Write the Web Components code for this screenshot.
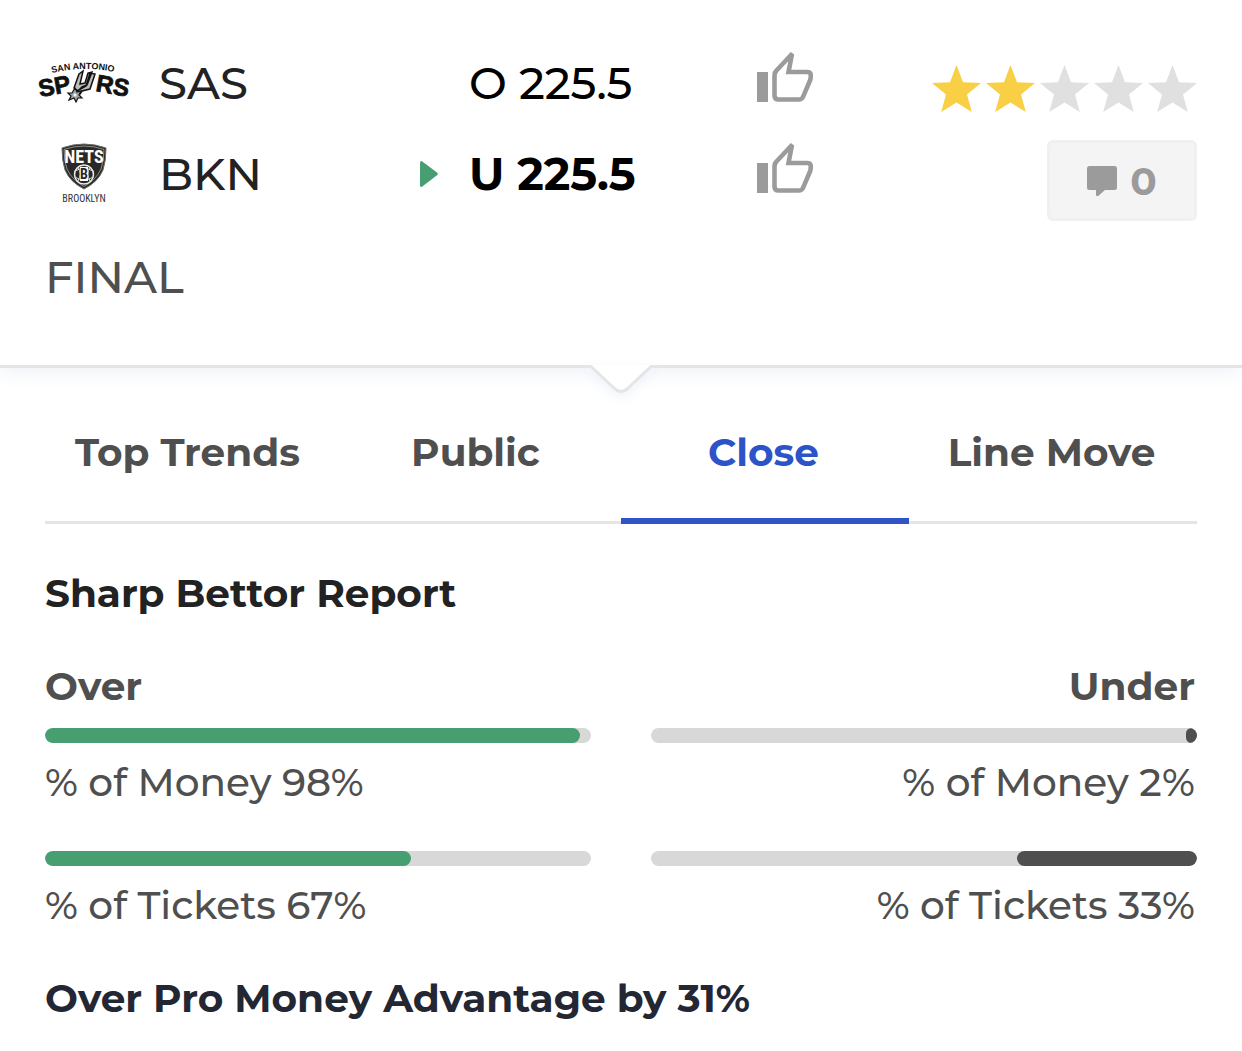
<!DOCTYPE html>
<html lang="en">
<head>
  <meta charset="UTF-8">
  <meta name="viewport" content="width=device-width, initial-scale=1">
  <title>SAS at BKN</title>
  <style>
    body {
      margin: 0;
      background: #fff;
      color: #4f4f4f;
      font-family: Montserrat, Inter, sans-serif;
      font-size: 39px;
      font-weight: 500;
      line-height: 46px;
    }
  </style>
</head>
<body>

<game-card>
  <bet-row>
    <spurs-logo slot="logo"></spurs-logo>
    <span slot="team">SAS</span>
    <span slot="line">O 225.5</span>
  </bet-row>
  <bet-row winner>
    <nets-logo slot="logo"></nets-logo>
    <span slot="team">BKN</span>
    <span slot="line">U 225.5</span>
  </bet-row>
  <span slot="status">FINAL</span>
  <star-rating slot="side" value="2"></star-rating>
  <comment-button slot="side">0</comment-button>
</game-card>

<main>
  <tab-bar>
    <tab-item>Top Trends</tab-item>
    <tab-item>Public</tab-item>
    <tab-item selected>Close</tab-item>
    <tab-item>Line Move</tab-item>
  </tab-bar>

  <sharp-report>
    <span slot="title">Sharp Bettor Report</span>
    <report-side>
      <span slot="name">Over</span>
      <percent-bar label="% of Money" value="98"></percent-bar>
      <percent-bar label="% of Tickets" value="67"></percent-bar>
    </report-side>
    <report-side end>
      <span slot="name">Under</span>
      <percent-bar end label="% of Money" value="2"></percent-bar>
      <percent-bar end label="% of Tickets" value="33"></percent-bar>
    </report-side>
    <span slot="summary">Over Pro Money Advantage by 31%</span>
  </sharp-report>
</main>

<template id="game-card">
  <style>
    :host { display: block; position: relative; border-bottom: 3px solid #e4e5e7; box-shadow: 0 4px 20px #edf2f8; background: #fff; }
    header { display: flex; padding: 37px 45px 60px 36px; }
    .rows { flex: 1; }
    .status { padding: 30px 0 0 9px; font-size: 45px; line-height: 56px; }
    .side { display: flex; flex-direction: column; align-items: flex-end; gap: 28px; padding-top: 28px; }
    .notch { position: absolute; top: 100%; left: 50%; margin-left: -33px; display: block; filter: drop-shadow(0 4px 6px #edf2f8); }
  </style>
  <header>
    <div class="rows">
      <slot></slot>
      <div class="status"><slot name="status"></slot></div>
    </div>
    <div class="side"><slot name="side"></slot></div>
  </header>
  <svg class="notch" width="66" height="32" viewBox="0 0 66 32" aria-hidden="true">
    <path d="M1 0V3L3 1.500 27 24Q33 29 39 24L63 1.500 65 3V0Z" fill="#fff"/>
    <path d="M0 1.500H3L27 24Q33 29 39 24L63 1.500H66" fill="none" stroke="#e4e5e7" stroke-width="3"/>
  </svg>
</template>

<template id="bet-row">
  <style>
    :host { display: grid; grid-template-columns: 96px 27px 261fr 49px 288fr 175fr; align-items: center; height: 91px; font-size: 45px; color: #222; }
    .logo { display: flex; justify-content: center; }
    .team { grid-column: 3; }
    .mark { grid-column: 4; display: flex; }
    .mark svg { visibility: hidden; }
    .line { grid-column: 5; color: #000; white-space: nowrap; }
    :host([winner]) .mark svg { visibility: visible; }
    :host([winner]) .line { font-weight: 700; }
    button { grid-column: 6; justify-self: start; display: flex; padding: 0 0 10px; border: 0; background: none; color: #9b9b9b; cursor: pointer; }
  </style>
  <div class="logo"><slot name="logo"></slot></div>
  <div class="team"><slot name="team"></slot></div>
  <div class="mark">
    <svg width="18" height="28" viewBox="0 0 18 28" aria-hidden="true"><path d="M0 2.500Q.4.2 2.300 1.400L17 12.500Q18.600 14 17 15.300L2.300 26.600Q.4 27.800 0 25.500Z" fill="#479f71"/></svg>
  </div>
  <div class="line"><slot name="line"></slot></div>
  <button type="button" aria-label="Like">
    <svg width="56" height="52" viewBox="0 0 56 52" aria-hidden="true">
      <path d="M0 20H11V50H0Z" fill="currentColor"/>
      <path d="M34 3 19.500 18.500Q17.500 20.500 17.500 23.500V43.500Q17.500 47.500 21.500 47.500H42Q45 47.500 46.200 44.500L53 28.500Q53.800 26.500 53.800 23.500 53.800 20 50 20H31.500L34.700 3.500Z" fill="none" stroke="currentColor" stroke-width="4.600"/>
    </svg>
  </button>
</template>

<template id="spurs-logo">
  <style>
    :host { display: block; }
    svg { display: block; overflow: visible; }
    text { font-family: "Liberation Sans", sans-serif; font-weight: 700; fill: #111; }
    .name { stroke: #111; stroke-width: .8; }
  </style>
  <svg width="94" height="44" viewBox="0 0 94 44" role="img" aria-label="San Antonio Spurs">
    <path id="arc" d="M15 12Q47 4 82 12" fill="none"/>
    <text font-size="9"><textPath href="#arc">SAN ANTONIO</textPath></text>
    <g class="name" font-size="24">
      <text x="3" y="36" transform="rotate(-10 3 36)">SP</text>
      <text x="58" y="30" transform="rotate(10 58 30)">RS</text>
    </g>
    <path d="M42 13 46 10 43 23 48 22 51 12 55 11 50 24 45 26 41 30 37 27ZM53 12 58 13 53 28 45 30 43 33 40 30 49 25Z" fill="#b9bdbd" stroke="#111" stroke-width="1.500"/>
    <path d="M38 27 40 31 44 30 42 34 45 37 41 37 39 41 37 37 32 39 34 35 31 32 35 32Z" fill="#9fa5a5" stroke="#111" stroke-width="1.200"/>
    <circle cx="38" cy="34" r="1.500" fill="#fff"/>
  </svg>
</template>

<template id="nets-logo">
  <style>
    :host { display: block; }
    svg { display: block; }
    text { font-family: "Roboto Condensed", "Open Sans Condensed", "Liberation Sans", sans-serif; font-weight: 700; text-anchor: middle; }
    .city { font-weight: 400; }
  </style>
  <svg width="48" height="62" viewBox="0 0 48 62" role="img" aria-label="Brooklyn Nets">
    <path d="M2 5Q24-3 46 5 46 18 43 27 38 39 24 46 10 39 5 27 2 18 2 5Z" fill="#292a27" stroke="#6b6d68"/>
    <path d="M4 6.500Q24-.5 44 6.500 44 18 41 26 36 37 24 43.500 12 37 7 26 4 18 4 6.500Z" fill="none" stroke="#b7b8b3" stroke-width=".7"/>
    <text x="24" y="20" font-size="18" fill="#fff">NETS</text>
    <circle cx="24" cy="31.500" r="9.500" fill="#292a27" stroke="#eee" stroke-width="1.500"/>
    <path d="M15 28Q24 23 33 28M15 34Q24 40 33 34M18 24Q22 31 18 38M30 24Q26 31 30 38" fill="none" stroke="#ddd"/>
    <path d="M20 24H28V38H20Z" fill="#fff"/>
    <text x="24" y="36" font-size="14" fill="#292a27">B</text>
    <text class="city" x="24" y="59" font-size="10" fill="#333">BROOKLYN</text>
  </svg>
</template>

<template id="star-rating">
  <style>
    :host { display: flex; gap: 5px; }
    svg { display: block; fill: #e0e0e0; }
    svg.on { fill: #f8cf45; }
  </style>
</template>

<template id="comment-button">
  <style>
    :host { display: block; }
    button { display: flex; align-items: center; justify-content: center; gap: 13px; width: 150px; height: 81px; padding: 0; border: 3px solid #f0f0f0; border-radius: 6px; background: #f4f4f4; color: #9b9b9b; font: inherit; font-weight: 700; cursor: pointer; }
  </style>
  <button type="button" aria-label="Comments">
    <svg width="30" height="30" viewBox="0 0 30 30" aria-hidden="true"><path d="M2.500 0H27.500Q30 0 30 2.500V21.500Q30 24 27.500 24H18L11.500 29.700Q9 31 9 28.500V24H2.500Q0 24 0 21.500V2.500Q0 0 2.500 0Z" fill="currentColor"/></svg>
    <span><slot></slot></span>
  </button>
</template>

<template id="tab-bar">
  <style>
    :host { display: grid; grid-template-columns: repeat(4, 1fr); margin: 0 45px; box-shadow: inset 0 -3px #e5e5e5; }
  </style>
  <slot></slot>
</template>

<template id="tab-item">
  <style>
    :host { display: block; }
    button { display: block; width: 100%; padding: 61px 3px 43px 0; border: 0; border-bottom: 6px solid transparent; background: none; color: #4f4f4f; font: inherit; font-weight: 700; white-space: nowrap; cursor: pointer; }
    :host([selected]) button { color: #2d53c8; border-color: #3054c6; }
  </style>
  <button type="button" role="tab"><slot></slot></button>
</template>

<template id="sharp-report">
  <style>
    :host { display: block; padding: 46px 45px 28px; }
    h2, h3 { margin: 0; font: inherit; font-weight: 700; }
    h2 { color: #222; }
    h3 { color: #232733; }
    .sides { display: grid; grid-template-columns: 1fr 1fr; gap: 60px; margin: 47px 0; }
  </style>
  <h2><slot name="title"></slot></h2>
  <div class="sides"><slot></slot></div>
  <h3><slot name="summary"></slot></h3>
</template>

<template id="report-side">
  <style>
    :host { display: block; }
    :host([end]) { text-align: right; }
    .name { margin-bottom: 19px; font-weight: 700; }
    :host([end]) .name { padding-right: 2px; }
    .bars { display: flex; flex-direction: column; gap: 46px; }
  </style>
  <div class="name"><slot name="name"></slot></div>
  <div class="bars"><slot></slot></div>
</template>

<template id="percent-bar">
  <style>
    :host { display: block; }
    .track { display: flex; height: 15px; margin-bottom: 16px; border-radius: 8px; background: #d8d8d8; overflow: hidden; }
    .fill { border-radius: 8px; background: #479f71; }
    :host([end]) .track { justify-content: flex-end; }
    :host([end]) .fill { background: #4f4f4f; }
    :host([end]) #label { padding-right: 2px; }
  </style>
  <div class="track" role="meter" aria-valuemin="0" aria-valuemax="100" aria-labelledby="label"><div class="fill"></div></div>
  <div id="label"></div>
</template>

<script>
  // Base class: clones the template that has the same id as the tag
  class TemplateElement extends HTMLElement {
    constructor() {
      super();
      const template = document.getElementById(this.localName);
      this.attachShadow({mode: 'open'}).appendChild(template.content.cloneNode(true));
    }
  }

  for (const name of ['game-card', 'bet-row', 'spurs-logo', 'nets-logo', 'comment-button', 'sharp-report', 'report-side']) {
    customElements.define(name, class extends TemplateElement {});
  }

  customElements.define('star-rating', class extends TemplateElement {
    connectedCallback() {
      const value = Number(this.getAttribute('value'));
      this.setAttribute('role', 'img');
      this.setAttribute('aria-label', value + ' of 5 stars');
      for (let i = 0; i < 5; i++) {
        this.shadowRoot.innerHTML += `<svg class="${i < value ? 'on' : ''}" width="49" height="47" viewBox="0 0 49 47"><path d="M24.500 0 31 17.200 49 18 35 29.500 39.800 47 24.500 37.500 9.200 47 14 29.500 0 18 18 17.200Z"/></svg>`;
      }
    }
  });

  customElements.define('tab-bar', class extends TemplateElement {
    connectedCallback() {
      this.setAttribute('role', 'tablist');
      this.addEventListener('click', e => {
        const picked = e.target.closest('tab-item');
        if (!picked) return;
        for (const tab of this.children) {
          tab.toggleAttribute('selected', tab === picked);
        }
      });
    }
  });

  customElements.define('tab-item', class extends TemplateElement {
    static observedAttributes = ['selected'];

    attributeChangedCallback() {
      this.shadowRoot.querySelector('button').setAttribute('aria-selected', this.hasAttribute('selected'));
    }
  });

  customElements.define('percent-bar', class extends TemplateElement {
    connectedCallback() {
      const value = this.getAttribute('value');
      this.shadowRoot.querySelector('.fill').style.width = value + '%';
      this.shadowRoot.querySelector('.track').setAttribute('aria-valuenow', value);
      this.shadowRoot.getElementById('label').textContent = `${this.getAttribute('label')} ${value}%`;
    }
  });
</script>
</body>
</html>
